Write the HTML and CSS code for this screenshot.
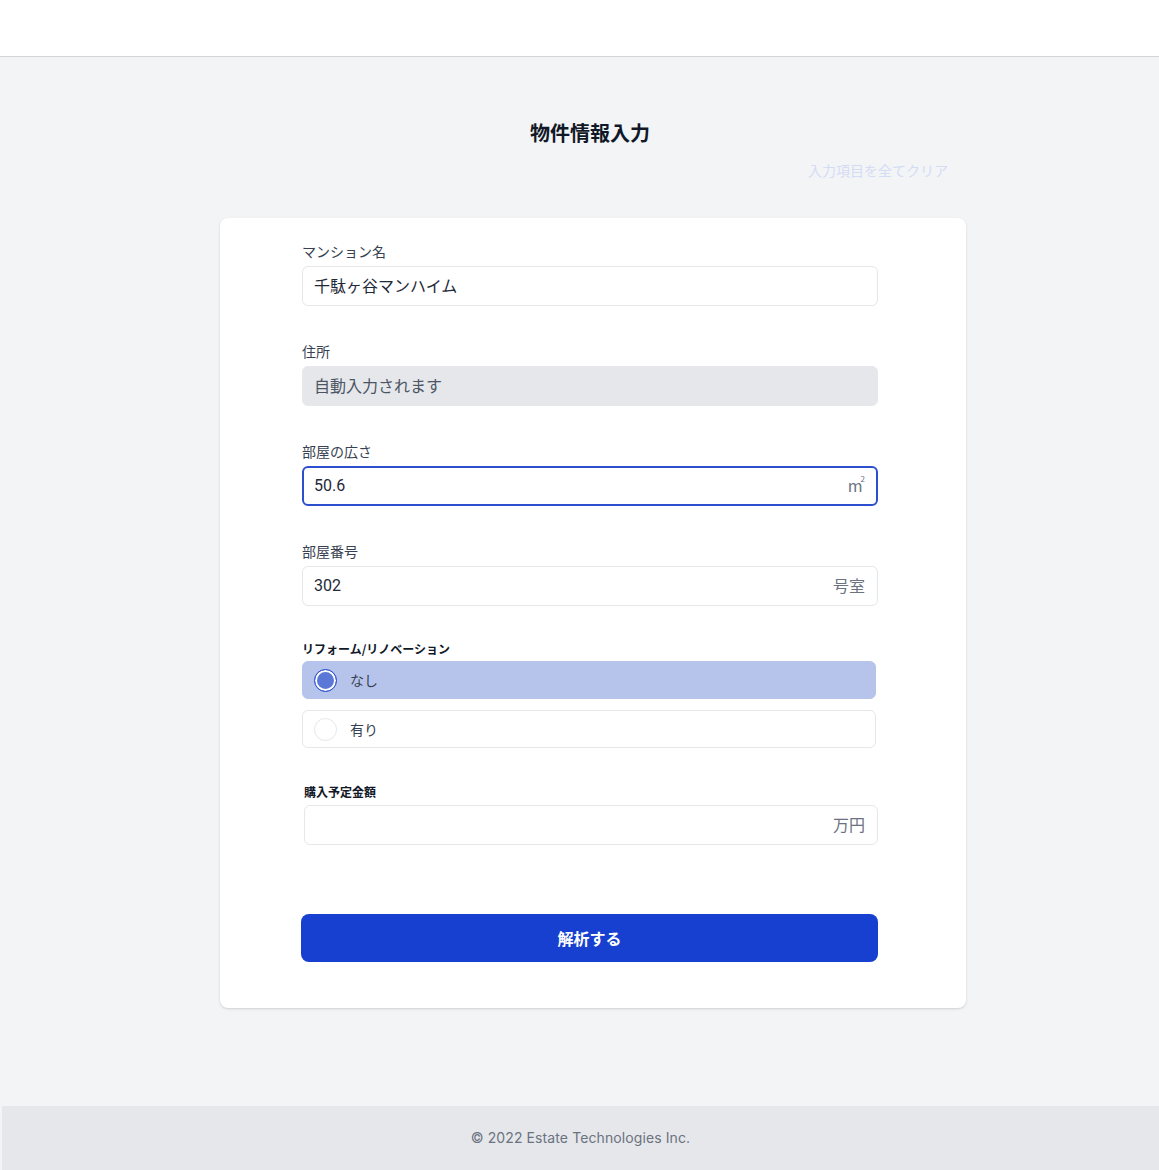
FILE: index.html
```html
<!DOCTYPE html>
<html lang="ja">
<head>
<meta charset="utf-8">
<title>物件情報入力</title>
<link rel="stylesheet" href="styles.css">
</head>
<body>
<header class="topbar"></header>
<main class="main">
  <div class="column">
    <h1 class="title">物件情報入力</h1>
    <div class="clear-row"><a class="clear-link" href="#">入力項目を全てクリア</a></div>
    <form class="card">
      <div class="form">
        <div class="field">
          <label class="label">マンション名</label>
          <div class="input"><span class="value">千駄ヶ谷マンハイム</span></div>
        </div>
        <div class="field">
          <label class="label">住所</label>
          <div class="input input-disabled"><span class="value muted">自動入力されます</span></div>
        </div>
        <div class="field">
          <label class="label">部屋の広さ</label>
          <div class="input input-focus"><span class="value num">50.6</span><span class="suffix">m<sup class="sq">2</sup></span></div>
        </div>
        <div class="field">
          <label class="label">部屋番号</label>
          <div class="input"><span class="value num">302</span><span class="suffix">号室</span></div>
        </div>
        <div class="field field-radio">
          <label class="label-bold">リフォーム/リノベーション</label>
          <div class="options">
            <div class="option option-selected"><span class="radio radio-on"></span><span class="option-text">なし</span></div>
            <div class="option"><span class="radio"></span><span class="option-text">有り</span></div>
          </div>
        </div>
        <div class="field field-price">
          <label class="label-bold">購入予定金額</label>
          <div class="input"><span class="value"></span><span class="suffix">万円</span></div>
        </div>
        <button type="button" class="submit">解析する</button>
      </div>
    </form>
  </div>
</main>
<footer class="footer">© 2022 Estate Technologies Inc.</footer>
</body>
</html>
```
FILE: styles.css
```css
* { box-sizing: border-box; }
html, body { margin: 0; padding: 0; }
body {
  background: #f3f4f6;
  font-family: "Noto Sans CJK JP", "Noto Sans", sans-serif;
  color: #374151;
}
.topbar {
  height: 57px;
  background: #ffffff;
  border-bottom: 1px solid #d4d4d8;
}
.main {
  display: flex;
  justify-content: center;
  padding-left: 27px;
  padding-top: 62px;
  min-height: 1049px;
}
.column {
  width: 746px;
  display: flex;
  flex-direction: column;
}
.title {
  margin: 0;
  text-align: center;
  font-size: 20px;
  line-height: 28px;
  font-weight: 700;
  color: #111827;
  padding-right: 6px;
}
.clear-row {
  display: flex;
  justify-content: flex-end;
  padding-right: 18px;
  margin-top: 13px;
}
.clear-link {
  font-size: 14px;
  line-height: 20px;
  color: #d3dcf5;
  text-decoration: none;
}
.card {
  margin-top: 38px;
  background: #ffffff;
  border-radius: 8px;
  box-shadow: 0 1px 3px rgba(0,0,0,0.10), 0 1px 2px rgba(0,0,0,0.06);
  padding: 23px 88px 46px 82px;
}
.form {
  display: flex;
  flex-direction: column;
}
.field {
  display: flex;
  flex-direction: column;
  gap: 5px;
  margin-bottom: 35px;
}
.label {
  font-size: 14px;
  line-height: 20px;
  color: #374151;
}
.label-bold {
  font-size: 12px;
  line-height: 16px;
  font-weight: 700;
  color: #111827;
}
.input {
  height: 40px;
  border: 1px solid #e5e7eb;
  border-radius: 6px;
  display: flex;
  align-items: center;
  justify-content: space-between;
  padding: 0 12px 2px 11px;
  background: #ffffff;
}
.input-disabled {
  background: #e5e7eb;
  border-color: #e5e7eb;
}
.input-focus {
  border: 2px solid #2b4fcf;
  padding: 0 11px 2px 10px;
}
.value {
  font-size: 16px;
  color: #1f2937;
}
.value.num {
  font-family: Roboto, "Noto Sans", sans-serif;
}
.value.muted { color: #4b5563; }
.suffix {
  font-size: 16px;
  color: #6b7280;
}
.sq {
  font-size: 8px;
  vertical-align: 10px;
  margin-left: -2px;
}
.field-radio {
  gap: 4px;
  margin-bottom: 36px;
  margin-right: 2px;
}
.options {
  display: flex;
  flex-direction: column;
  gap: 11px;
}
.option {
  height: 38px;
  border: 1px solid #e5e7eb;
  border-radius: 6px;
  display: flex;
  align-items: center;
  padding-left: 11px;
  gap: 13px;
}
.option-selected {
  background: #b6c4ec;
  border-color: #b6c4ec;
}
.radio {
  width: 23px;
  height: 23px;
  border-radius: 50%;
  border: 1px solid #e5e7eb;
  background: #ffffff;
}
.radio-on {
  border: 1.5px solid #2b4fcf;
  box-shadow: inset 0 0 0 2px #ffffff;
  background: #5b78d7;
}
.option-text {
  font-size: 14px;
  color: #374151;
}
.field-price {
  margin-left: 2px;
  margin-bottom: 69px;
}
.submit {
  height: 48px;
  margin-left: -1px;
  border: none;
  border-radius: 8px;
  background: #1740d0;
  color: #ffffff;
  font-family: "Noto Sans CJK JP", "Noto Sans", sans-serif;
  font-size: 16px;
  font-weight: 700;
  padding-bottom: 2px;
  cursor: pointer;
}
.footer {
  height: 64px;
  background: #e5e7eb;
  margin-left: 2px;
  display: flex;
  align-items: center;
  justify-content: center;
  padding-bottom: 2px;
  font-family: Inter, "Noto Sans", sans-serif;
  font-size: 14px;
  letter-spacing: 0.1px;
  color: #6b7280;
}
```
